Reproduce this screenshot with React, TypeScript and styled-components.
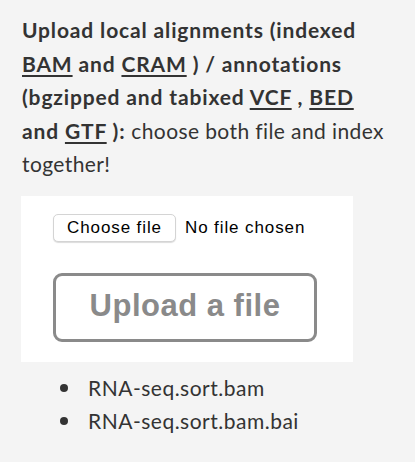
import React from "react";
import styled, { createGlobalStyle } from "styled-components";

const Global = createGlobalStyle`
  html, body { margin: 0; padding: 0; background: #f4f4f4; }
  body { width: 415px; height: 462px; overflow: hidden; }
`;

const Page = styled.div`
  padding: 13px 0 0 22px;
  font-family: Lato, "Open Sans", sans-serif;
  color: #333;
`;

const Intro = styled.p`
  margin: 0;
  width: 372px;
  font-size: 21px;
  line-height: 33.5px;
  letter-spacing: 0.4px;
`;

const Strong = styled.strong`
  font-weight: 700;
  letter-spacing: 0.85px;
`;

const Link = styled.a`
  color: #333;
  text-decoration: underline;
  text-decoration-thickness: 1.5px;
  text-underline-offset: 3px;
`;

const Panel = styled.div`
  margin-top: 15px;
  margin-left: -1px;
  width: 332px;
  height: 166px;
  background: #fff;
  padding: 18px 0 0 32px;
  box-sizing: border-box;
  display: flex;
  flex-direction: column;
  align-items: flex-start;
  gap: 31px;
  font-family: "Liberation Sans", Arial, sans-serif;
`;

const FileRow = styled.div`
  display: flex;
  align-items: center;
  gap: 9px;
  font-size: 17px;
  letter-spacing: 0.9px;
  color: #000;
`;

const ChooseButton = styled.span`
  display: inline-flex;
  align-items: center;
  height: 28px;
  padding: 0 13px 0 13px;
  box-sizing: border-box;
  border: 1px solid #d4d4d4;
  border-radius: 5px;
  background: #fff;
  box-shadow: 0 1px 1px rgba(0, 0, 0, 0.14);
`;

const UploadButton = styled.button`
  width: 264px;
  height: 69px;
  border: 3px solid #8a8a8a;
  border-radius: 9px;
  background: #fff;
  color: #8a8a8a;
  font-family: "Liberation Sans", Arial, sans-serif;
  font-weight: 700;
  font-size: 31px;
  letter-spacing: 0.5px;
  padding: 0 0 2px 0;
`;

const List = styled.ul`
  margin: 9px 0 0 0;
  padding: 0 0 0 66px;
  list-style: none;
  font-size: 21px;
  line-height: 33px;
  letter-spacing: 0.5px;
`;

const Item = styled.li`
  position: relative;
  &::before {
    content: "";
    position: absolute;
    left: -28px;
    top: 13px;
    width: 8px;
    height: 8px;
    border-radius: 50%;
    background: #333;
  }
`;

export default function App() {
  return (
    <>
      <Global />
      <Page>
        <Intro>
          <Strong>
            Upload local alignments (indexed <Link>BAM</Link> and <Link>CRAM</Link> ) / annotations
            (bgzipped and tabixed <Link>VCF</Link> , <Link>BED</Link> and <Link>GTF</Link> ):
          </Strong>{" "}
          choose both file and index together!
        </Intro>
        <Panel>
          <FileRow>
            <ChooseButton>Choose file</ChooseButton>
            <span>No file chosen</span>
          </FileRow>
          <UploadButton>Upload a file</UploadButton>
        </Panel>
        <List>
          <Item>RNA-seq.sort.bam</Item>
          <Item>RNA-seq.sort.bam.bai</Item>
        </List>
      </Page>
    </>
  );
}
